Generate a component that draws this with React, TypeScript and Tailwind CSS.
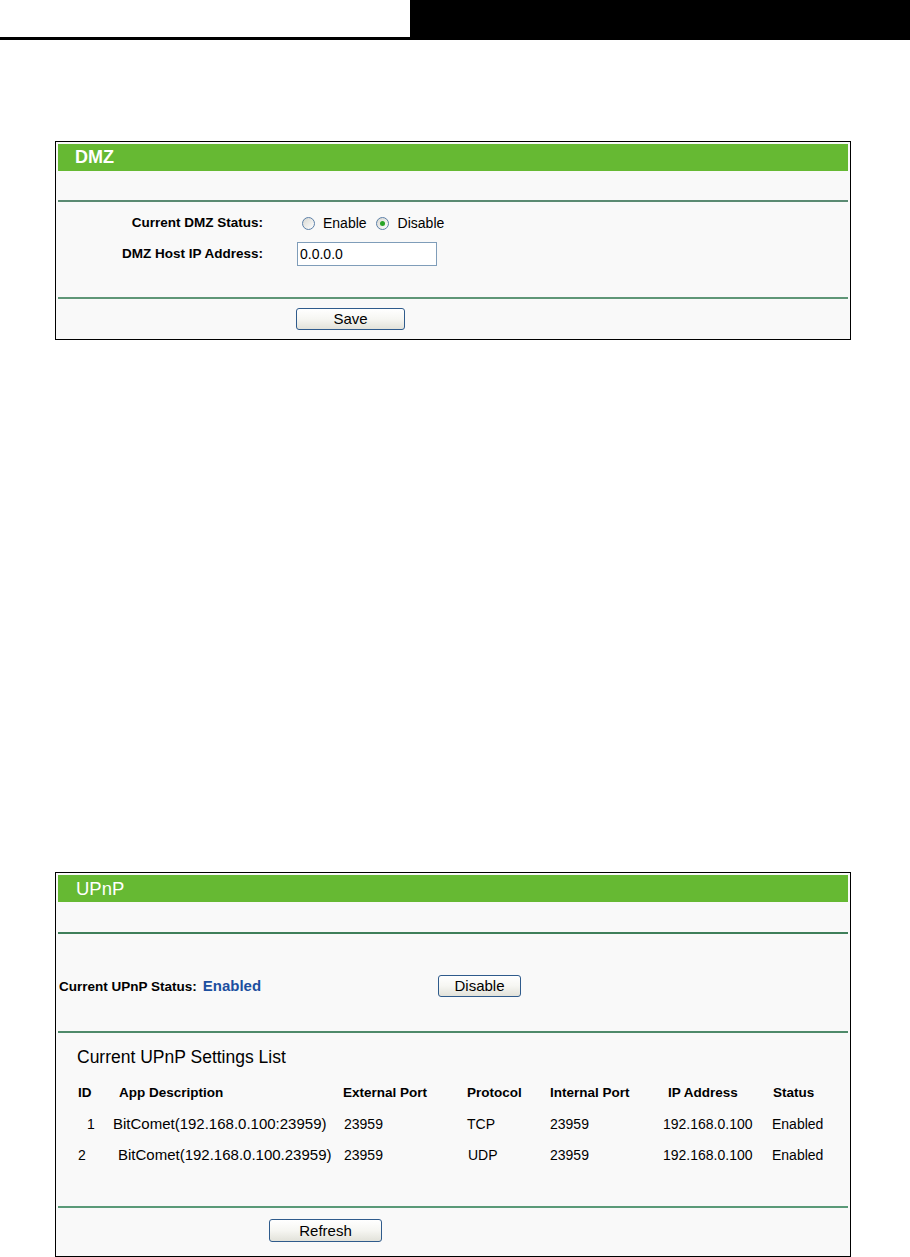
import React from "react";

const font = { fontFamily: '"Liberation Sans", Arial, sans-serif' };

function Radio({ checked }: { checked?: boolean }) {
  return (
    <span className="flex h-[13px] w-[13px] items-center justify-center rounded-full border border-[#5b7fa8] bg-gradient-to-br from-[#d8d8d2] to-white">
      {checked && <span className="h-[5px] w-[5px] rounded-full bg-[#28a428]" />}
    </span>
  );
}

function Btn({ label, w, h }: { label: string; w: string; h: string }) {
  return (
    <button
      className={`${w} ${h} rounded-[3px] border border-[#2f5b8c] bg-gradient-to-b from-white via-[#f6f6f2] to-[#e2e2da] text-[15px] leading-none text-black`}
    >
      {label}
    </button>
  );
}

function Divider({ color }: { color: string }) {
  return <div className={`h-[2px] ${color}`} />;
}

const rows = [
  { id: "1", idPad: "pl-[9px]", app: "BitComet(192.168.0.100:23959)", appPad: "pl-0", ext: "23959", proto: "TCP", protoPad: "pl-0", int: "23959", ip: "192.168.0.100", status: "Enabled" },
  { id: "2", idPad: "pl-0", app: "BitComet(192.168.0.100.23959)", appPad: "pl-[5px]", ext: "23959", proto: "UDP", protoPad: "pl-[1px]", int: "23959", ip: "192.168.0.100", status: "Enabled" },
];

const cols = "grid grid-cols-[35px_230px_124px_83px_113px_109px_1fr]";

export default function App() {
  return (
    <div className="min-h-[1257px] w-[910px] bg-white" style={font}>
      {/* page header */}
      <div className="flex h-[40px]">
        <div className="w-[410px] border-b-[3px] border-black" />
        <div className="flex-1 bg-black" />
      </div>

      {/* DMZ */}
      <div className="ml-[55px] mt-[101px] w-[796px] border border-black bg-[#f9f9f9] p-[2px]">
        <div className="flex h-[27px] items-center bg-[#66b933] pl-[17px] text-[18px] font-bold text-white">DMZ</div>
        <div className="h-[29px]" />
        <Divider color="bg-[#5a8a72]" />
        <div className="pb-[31px] pt-[10px]">
          <div className="grid grid-cols-[205px_1fr] items-center gap-x-[34px]">
            <div className="flex h-[22px] items-center justify-end text-[13.5px] font-bold">Current DMZ Status:</div>
            <div className="flex h-[22px] items-center text-[14px]">
              <span className="ml-[5px] flex items-center"><Radio /></span>
              <span className="ml-[8px]">Enable</span>
              <span className="ml-[9px] flex items-center"><Radio checked /></span>
              <span className="ml-[9px]">Disable</span>
            </div>
            <div className="mt-[8px] flex h-[24px] items-center justify-end text-[13.5px] font-bold">DMZ Host IP Address:</div>
            <div className="mt-[8px] flex h-[24px] w-[140px] items-center border border-[#7f9db9] bg-white pl-[2px] text-[14px]">0.0.0.0</div>
          </div>
        </div>
        <Divider color="bg-[#5f9677]" />
        <div className="pb-[6px] pl-[238px] pt-[8px]">
          <Btn label="Save" w="w-[109px]" h="h-[22px]" />
        </div>
      </div>

      {/* UPnP */}
      <div className="ml-[55px] mt-[532px] w-[796px] border border-black bg-[#f9f9f9] p-[2px]">
        <div className="flex h-[27px] items-center bg-[#66b933] pl-[18px] text-[18.5px] text-white">UPnP</div>
        <div className="h-[30px]" />
        <Divider color="bg-[#3f7f5a]" />
        <div className="grid grid-cols-[380px_1fr] items-center pb-[33px] pt-[40px]">
          <div className="flex items-baseline pl-[1px]">
            <span className="text-[13.5px] font-bold">Current UPnP Status:</span>
            <span className="ml-[6px] text-[15px] font-bold text-[#1c4fa0]">Enabled</span>
          </div>
          <div>
            <Btn label="Disable" w="w-[83px]" h="h-[22px]" />
          </div>
        </div>
        <Divider color="bg-[#4f8a6a]" />
        <div className="pl-[19px] pt-[14px] text-[17.5px] leading-[20px]">Current UPnP Settings List</div>
        <div className="mt-[11px] pl-[20px]">
          <div className={`${cols} h-[31px] items-center text-[13.5px] font-bold`}>
            <div>ID</div>
            <div className="pl-[6px]">App Description</div>
            <div>External Port</div>
            <div>Protocol</div>
            <div>Internal Port</div>
            <div className="pl-[5px]">IP Address</div>
            <div className="pl-[1px]">Status</div>
          </div>
          {rows.map((r) => (
            <div key={r.id} className={`${cols} h-[31px] items-center text-[14px]`}>
              <div className={r.idPad}>{r.id}</div>
              <div className={`${r.appPad} text-[15px]`}>{r.app}</div>
              <div className="pl-[1px]">{r.ext}</div>
              <div className={r.protoPad}>{r.proto}</div>
              <div>{r.int}</div>
              <div>{r.ip}</div>
              <div>{r.status}</div>
            </div>
          ))}
        </div>
        <div className="h-[35px]" />
        <Divider color="bg-[#5a9a78]" />
        <div className="pb-[11px] pl-[211px] pt-[11px]">
          <Btn label="Refresh" w="w-[113px]" h="h-[23px]" />
        </div>
      </div>
    </div>
  );
}
